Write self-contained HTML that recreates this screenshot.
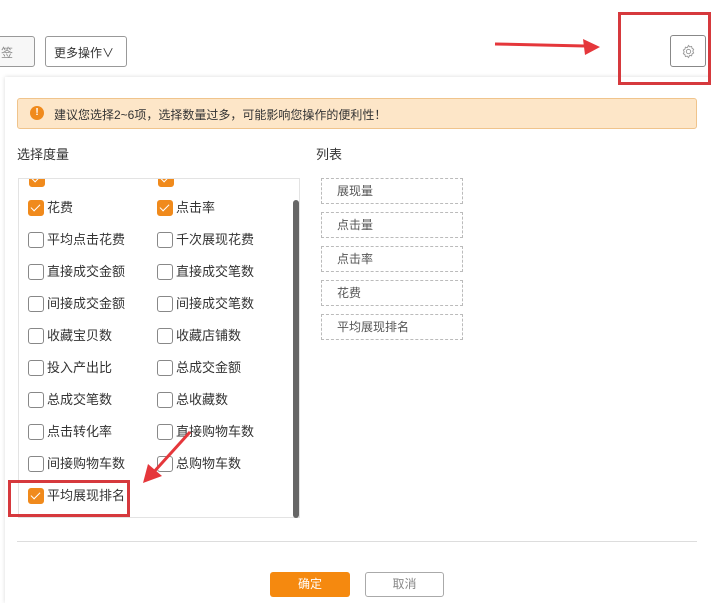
<!DOCTYPE html><html><head><meta charset="utf-8"><style>
body{margin:0;width:711px;height:603px;background:#fff;position:relative;overflow:hidden;font-family:"Liberation Sans","Noto Sans CJK SC",sans-serif;font-size:12px;color:#333}
.a{position:absolute}
.btn{position:absolute;border:1px solid #999;border-radius:3px;background:#fff;box-sizing:border-box}
.cb{position:absolute;width:16px;height:16px;border:1px solid #888;border-radius:3px;box-sizing:border-box;background:#fff}
.cb.on{background:#f08a1c;border-color:#f08a1c}
.cb.on:after{content:"";position:absolute;left:4px;top:1px;width:4px;height:8px;border:solid #fff;border-width:0 1.5px 1.5px 0;transform:rotate(45deg)}
.lb{position:absolute;font-size:13px;color:#333;line-height:16px}
.li{position:absolute;left:321px;width:142px;height:26px;border:1px dashed #bbb;box-sizing:border-box;padding-left:15px;line-height:24px;color:#555}
</style></head><body>
<div class="btn" style="left:-10px;top:36px;width:45px;height:31px;background:#f7f7f7"><span class="a" style="left:10px;top:7px;color:#888">签</span></div>
<div class="btn" style="left:45px;top:36px;width:82px;height:31px"><span class="a" style="left:8px;top:7px">更多操作∨</span></div>
<div class="btn" style="left:670px;top:35px;width:36px;height:32px;border-color:#888"><svg class="a" style="left:10px;top:8px" width="15" height="15" viewBox="0 0 16 16"><circle cx="8" cy="8" r="2.3" fill="none" stroke="#999"/><path d="M8 1.5l1.3 1.6 2-.5.5 2 1.7 1.1-.9 1.9.9 1.9-1.7 1.1-.5 2-2-.5L8 14.5l-1.3-1.6-2 .5-.5-2-1.7-1.1.9-1.9-.9-1.9 1.7-1.1.5-2 2 .5z" fill="none" stroke="#999"/></svg></div>
<div class="a" style="left:5px;top:77px;width:706px;height:526px;box-shadow:0 0 4px rgba(0,0,0,.15);background:#fff"></div>
<div class="a" style="left:618px;top:12px;width:93px;height:73px;border:3px solid #d6393d;box-sizing:border-box"></div>
<div class="a" style="left:17px;top:98px;width:680px;height:31px;background:#fde6c8;border:1px solid #f0c48c;border-radius:3px;box-sizing:border-box"><div class="a" style="left:12px;top:7px;width:14px;height:14px;border-radius:50%;background:#f08a1c;color:#fff;font-size:10px;text-align:center;line-height:14px;font-weight:bold">!</div><span class="a" style="left:36px;top:7px">建议您选择2~6项，选择数量过多，可能影响您操作的便利性！</span></div>
<div class="lb" style="left:17px;top:147px">选择度量</div>
<div class="lb" style="left:316px;top:147px">列表</div>
<div class="a" style="left:18px;top:178px;width:282px;height:340px;border:1px solid #e3e3e3;box-sizing:border-box;overflow:hidden">
<div class="cb on" style="left:10px;top:-8px"></div><div class="cb on" style="left:139px;top:-8px"></div>
</div>
<div class="a" style="left:293px;top:200px;width:6px;height:318px;background:#666;border-radius:3px"></div>
<div id="rows"></div>
<div class="li" style="top:178px">展现量</div>
<div class="li" style="top:212px">点击量</div>
<div class="li" style="top:246px">点击率</div>
<div class="li" style="top:280px">花费</div>
<div class="li" style="top:314px">平均展现排名</div>
<div class="a" style="left:17px;top:541px;width:680px;height:1px;background:#ddd"></div>
<div class="a" style="left:270px;top:572px;width:80px;height:25px;background:#f5890f;border-radius:3px;color:#fff;text-align:center;line-height:25px">确定</div>
<div class="btn" style="left:365px;top:572px;width:79px;height:25px;border-color:#aaa;color:#888;text-align:center;line-height:23px">取消</div>
<div class="a" style="left:8px;top:480px;width:122px;height:37px;border:3px solid #d6393d;box-sizing:border-box"></div>
<svg class="a" style="left:0;top:0" width="711" height="603"><path d="M495 44L585 46" stroke="#e5373b" stroke-width="3"/><path d="M600 47L583 39 585 55z" fill="#e5373b"/><path d="M190 432L152 474" stroke="#e5373b" stroke-width="3"/><path d="M143 483L148 464 162 476z" fill="#e5373b"/></svg>
<script>
var d=[["花费",1,"点击率",1],["平均点击花费",0,"千次展现花费",0],["直接成交金额",0,"直接成交笔数",0],["间接成交金额",0,"间接成交笔数",0],["收藏宝贝数",0,"收藏店铺数",0],["投入产出比",0,"总成交金额",0],["总成交笔数",0,"总收藏数",0],["点击转化率",0,"直接购物车数",0],["间接购物车数",0,"总购物车数",0],["平均展现排名",1]];
var h="";d.forEach(function(r,i){var y=200+i*32;h+='<div class="cb'+(r[1]?' on':'')+'" style="left:28px;top:'+y+'px"></div><div class="lb" style="left:47px;top:'+(y)+'px">'+r[0]+'</div>';if(r[2])h+='<div class="cb'+(r[3]?' on':'')+'" style="left:157px;top:'+y+'px"></div><div class="lb" style="left:176px;top:'+y+'px">'+r[2]+'</div>';});
document.getElementById("rows").outerHTML=h;
</script>
</body></html>
